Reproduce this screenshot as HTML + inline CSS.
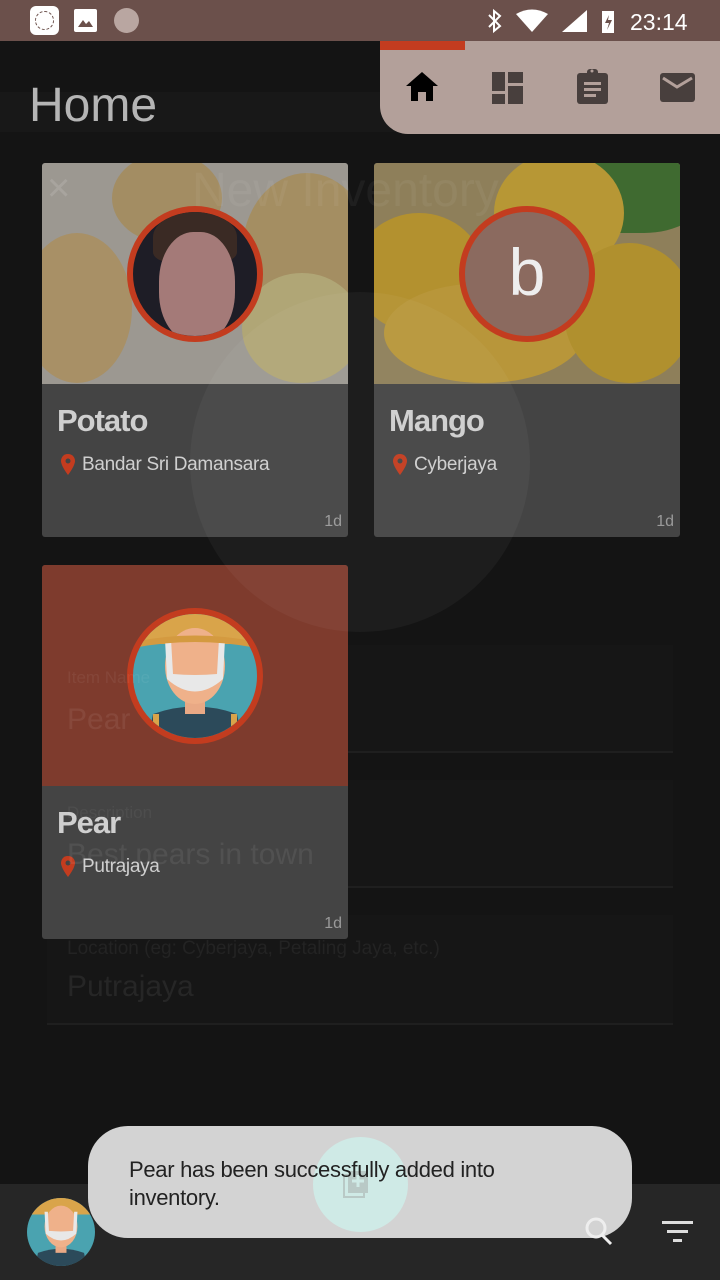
<!DOCTYPE html>
<html><head><meta charset="utf-8"><style>
*{margin:0;padding:0;box-sizing:border-box}
body{width:720px;height:1280px;background:#141414;position:relative;overflow:hidden;font-family:"Liberation Sans",sans-serif}
.abs{position:absolute}
.card{position:absolute;width:306px;height:374px;border-radius:3px;overflow:hidden;background:#444}
.img{position:absolute;left:0;top:0;width:306px;height:221px;overflow:hidden}
.ttl{position:absolute;left:15px;top:240px;font-size:31px;font-weight:bold;color:#cfcfcf;letter-spacing:-1px}
.loc{position:absolute;left:40px;top:291px;font-size:19px;color:#cfcfcf;letter-spacing:-0.3px}
.pin{position:absolute;left:18px;top:290px}
.age{position:absolute;right:6px;bottom:6px;font-size:16px;color:#9a9a9a}
.av{position:absolute;left:85px;top:43px;width:136px;height:136px;border-radius:50%;border:6px solid #c33c1f;overflow:hidden}
</style></head><body>
<div class="abs" style="left:0;top:0;width:720px;height:41px;background:#6b504b"></div>
<div class="abs" style="left:30px;top:6px;width:29px;height:29px;background:#fff;border-radius:6px"><div style="position:absolute;left:5px;top:5px;width:19px;height:19px;border:1.5px dashed #6b504b;border-radius:50%"></div></div>
<div class="abs" style="left:74px;top:9px;width:23px;height:23px;background:#fff;border-radius:2px"><svg width="23" height="23"><path d="M4 18 L9 11 L12 15 L15 12 L19 18Z" fill="#6b504b"/></svg></div>
<div class="abs" style="left:114px;top:8px;width:25px;height:25px;border-radius:50%;background:#b9a6a1"></div>
<svg class="abs" style="left:484px;top:8px" width="210" height="26">
<path d="M5 7 L16 18 L10 23 L10 3 L16 8 L5 19" stroke="#fff" stroke-width="2" fill="none"/>
<path d="M32 6 Q48 -3 64 6 L48 24Z" fill="#fff"/>
<path d="M78 24 L103 24 L103 2Z" fill="#fff"/>
<rect x="118" y="3" width="12" height="22" fill="#fff"/><path d="M125 7 L121 15 L125 15 L123 22 L128 12 L124 12Z" fill="#6b504b"/>
<text x="146" y="22" font-size="23" fill="#fff" font-family="Liberation Sans">23:14</text></svg>
<div class="abs" style="left:0;top:92px;width:720px;height:40px;background:#181818"></div>
<div class="abs" style="left:29px;top:78px;font-size:48px;color:#b5b5b5">Home</div>
<div class="abs" style="left:380px;top:41px;width:340px;height:93px;background:#b3a09a;border-bottom-left-radius:28px"></div>
<div class="abs" style="left:380px;top:41px;width:85px;height:9px;background:#c33c1f"></div>
<svg class="abs" style="left:400px;top:64px" width="310" height="44">
<path d="M6 22 L22 8 L38 22 L33 22 L33 37 L26 37 L26 28 L18 28 L18 37 L11 37 L11 22Z" fill="#000"/>
<g fill="#483f3d"><rect x="92" y="8" width="13" height="19"/><rect x="108" y="8" width="15" height="11"/><rect x="92" y="30" width="13" height="10"/><rect x="108" y="22" width="15" height="18"/>
<rect x="177" y="9" width="31" height="31" rx="3"/><rect x="187" y="5" width="11" height="7" rx="3"/>
<rect x="260" y="9" width="35" height="29" rx="3"/></g>
<g fill="#b3a09a"><rect x="184" y="18" width="17" height="3"/><rect x="184" y="24" width="17" height="3"/><rect x="184" y="30" width="12" height="3"/><circle cx="192" cy="7" r="1.5"/></g>
<path d="M263 14 L277 23 L292 14" stroke="#b3a09a" stroke-width="3" fill="none"/>
</svg>
<div class="card" style="left:42px;top:163px">
<div class="img" style="background:#9c9891">
<div class="abs" style="left:-20px;top:70px;width:110px;height:150px;border-radius:50%;background:#a89066"></div>
<div class="abs" style="left:70px;top:-10px;width:110px;height:90px;border-radius:50%;background:#a38d63"></div>
<div class="abs" style="left:200px;top:10px;width:130px;height:160px;border-radius:50%;background:#a48e62"></div>
<div class="abs" style="left:200px;top:110px;width:120px;height:110px;border-radius:50%;background:#b0a676"></div>
</div>
<div class="av" style="background:#1e1d26"><div style="position:absolute;left:20px;top:0;width:84px;height:50px;border-radius:50% 50% 20% 20%;background:#3a2a24"></div><div style="position:absolute;left:26px;top:20px;width:76px;height:110px;border-radius:45%;background:#a47a78"></div></div>
<svg class="pin" width="16" height="24"><path d="M8 1 C3 1 1 5 1 8 C1 13 8 22 8 22 C8 22 15 13 15 8 C15 4 12 1 8 1Z" fill="#c33c1f"/><circle cx="8" cy="8" r="2.5" fill="#444"/></svg>
<div class="ttl">Potato</div><div class="loc">Bandar Sri Damansara</div><div class="age">1d</div>
</div>
<div class="card" style="left:374px;top:163px">
<div class="img" style="background:#8e7f5a">
<div class="abs" style="left:180px;top:-20px;width:150px;height:90px;background:#3f6a30;border-radius:40%"></div>
<div class="abs" style="left:-20px;top:50px;width:130px;height:120px;border-radius:50%;background:#b3912f"></div>
<div class="abs" style="left:120px;top:-10px;width:130px;height:120px;border-radius:50%;background:#b79735"></div>
<div class="abs" style="left:10px;top:120px;width:200px;height:100px;border-radius:50%;background:#b8963a"></div>
<div class="abs" style="left:190px;top:80px;width:130px;height:140px;border-radius:50%;background:#b0902e"></div>
</div>
<div class="av" style="background:#8b6a5f;color:#eee;font-size:66px;text-align:center;line-height:120px">b</div>
<svg class="pin" width="16" height="24"><path d="M8 1 C3 1 1 5 1 8 C1 13 8 22 8 22 C8 22 15 13 15 8 C15 4 12 1 8 1Z" fill="#c33c1f"/><circle cx="8" cy="8" r="2.5" fill="#444"/></svg>
<div class="ttl">Mango</div><div class="loc">Cyberjaya</div><div class="age">1d</div>
</div>
<div class="abs" style="left:47px;top:645px;width:626px;height:108px;background:#161616;border-bottom:2px solid #1f1f1f"></div>
<div class="abs" style="left:47px;top:780px;width:626px;height:108px;background:#161616;border-bottom:2px solid #1f1f1f"></div>
<div class="abs" style="left:47px;top:915px;width:626px;height:110px;background:#161616;border-bottom:2px solid #1f1f1f"></div>
<div class="abs" style="left:67px;top:938px;font-size:19px;color:#232323">Location (eg: Cyberjaya, Petaling Jaya, etc.)</div>
<div class="abs" style="left:67px;top:970px;font-size:30px;color:#262626">Putrajaya</div>
<div class="card" style="left:42px;top:565px">
<div class="img" style="background:#7e3b2d"></div>
<div class="av" style="background:#4aa3b0">
<svg width="124" height="124" viewBox="0 0 124 124"><path d="M0 10 Q62 -10 124 10 L124 30 L0 30Z" fill="#d9a44a"/><path d="M15 124 L20 100 Q62 85 104 100 L109 124Z" fill="#2c4a5a"/><rect x="20" y="100" width="6" height="24" fill="#d9a44a"/><rect x="98" y="100" width="6" height="24" fill="#d9a44a"/><rect x="52" y="75" width="20" height="25" fill="#e9a985"/><ellipse cx="62" cy="52" rx="30" ry="38" fill="#efb18a"/><path d="M32 25 L38 25 L40 60 Q62 62 84 60 L86 25 L92 25 L90 65 Q62 90 34 65Z" fill="#e8e8e8"/><path d="M0 28 Q62 15 124 28 L124 34 Q62 22 0 34Z" fill="#d49a40"/></svg>
</div>
<svg class="pin" width="16" height="24"><path d="M8 1 C3 1 1 5 1 8 C1 13 8 22 8 22 C8 22 15 13 15 8 C15 4 12 1 8 1Z" fill="#c33c1f"/><circle cx="8" cy="8" r="2.5" fill="#444"/></svg>
<div class="ttl">Pear</div><div class="loc">Putrajaya</div><div class="age">1d</div>
</div>
<div class="abs" style="left:67px;top:668px;font-size:17px;color:rgba(255,255,255,0.06);z-index:5">Item Name</div>
<div class="abs" style="left:67px;top:703px;font-size:30px;color:rgba(255,255,255,0.07);z-index:5">Pear</div>
<div class="abs" style="left:67px;top:803px;font-size:17px;color:rgba(255,255,255,0.05);z-index:5">Description</div>
<div class="abs" style="left:67px;top:838px;font-size:30px;color:rgba(255,255,255,0.07);z-index:5">Best pears in town</div>
<div class="abs" style="left:190px;top:292px;width:340px;height:340px;border-radius:50%;background:rgba(255,255,255,0.04);z-index:6"></div>
<div class="abs" style="left:192px;top:163px;font-size:48px;color:rgba(255,255,255,0.05);z-index:6">New Inventory</div>
<div class="abs" style="left:47px;top:166px;font-size:40px;color:rgba(255,255,255,0.12);z-index:6">×</div>
<div class="abs" style="left:0;top:1184px;width:720px;height:96px;background:#262626"></div>
<div class="abs" style="left:27px;top:1198px;width:68px;height:68px;border-radius:50%;overflow:hidden;background:#4aa3b0">
<svg width="68" height="68" viewBox="0 0 124 124"><path d="M0 0 L124 0 L124 30 L0 30Z" fill="#d9a44a"/><path d="M15 124 L20 100 Q62 85 104 100 L109 124Z" fill="#2c4a5a"/><rect x="52" y="75" width="20" height="25" fill="#e9a985"/><ellipse cx="62" cy="52" rx="30" ry="38" fill="#efb18a"/><path d="M32 25 L38 25 L40 60 Q62 62 84 60 L86 25 L92 25 L90 65 Q62 90 34 65Z" fill="#e8e8e8"/></svg></div>
<div class="abs" style="left:88px;top:1126px;width:544px;height:112px;border-radius:40px;background:#d3d3d3"></div>
<div class="abs" style="left:313px;top:1137px;width:95px;height:95px;border-radius:50%;background:#cfeae6"></div>
<svg class="abs" style="left:340px;top:1165px" width="40" height="40"><rect x="8" y="6" width="20" height="22" fill="#b9c9c6"/><rect x="4" y="10" width="20" height="22" fill="none" stroke="#b9c9c6" stroke-width="2"/><path d="M18 10 V22 M12 16 H24" stroke="#cfeae6" stroke-width="3"/></svg>
<svg class="abs" style="left:580px;top:1214px" width="120" height="36"><circle cx="16" cy="14" r="9" stroke="#eee" stroke-width="3" fill="none"/><path d="M22 21 L31 30" stroke="#eee" stroke-width="3"/><rect x="82" y="7" width="31" height="3" fill="#ddd"/><rect x="87" y="16" width="21" height="3" fill="#ddd"/><rect x="93" y="25" width="9" height="3" fill="#ddd"/></svg>
<div class="abs" style="left:129px;top:1156px;font-size:22px;line-height:28px;color:#222;width:460px;letter-spacing:-0.3px">Pear has been successfully added into inventory.</div>
</body></html>
